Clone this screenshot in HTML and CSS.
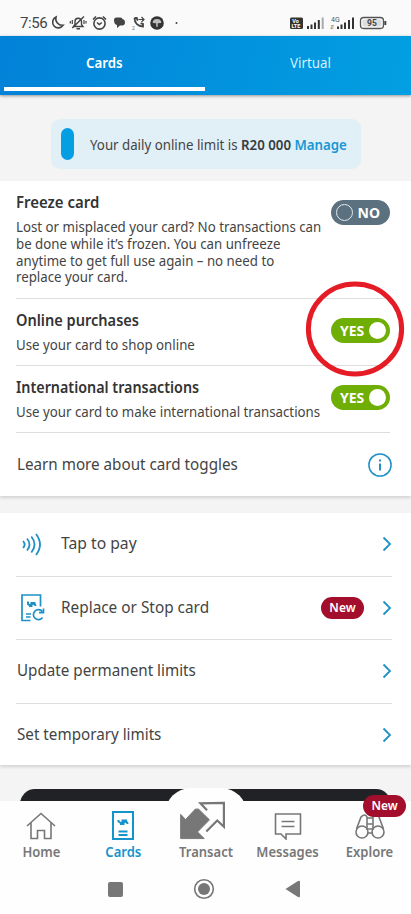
FILE: index.html
```html
<!DOCTYPE html>
<html lang="en">
<head>
<meta charset="utf-8">
<title>Cards</title>
<link rel="stylesheet" href="styles.css">
</head>
<body>
<div class="phone">
  <header class="status">
    <span class="time">7:56</span>
    <svg class="status-left" width="132" height="18" viewBox="49 14 132 18" fill="none" stroke="#444" stroke-width="1.6">
      <path d="M56 17a5.7 5.7 0 1 0 7.2 8.2A6.5 6.5 0 0 1 56 17z"/>
      <path stroke-width="1.400" d="M73.500 26.500l1.500-2v-3c0-4 6-4.500 6.500 0v3l1.500 2zM76.500 28.800h3.500M72.300 28L84 16.500"/><path stroke-width="1.200" d="M72.300 20v4M70.300 21v2.500M84 20v4M86 21v2.500"/>
      <circle cx="99.500" cy="23.500" r="5.600"/><path d="M97 22.500l2.300 2 2.500-2M93 19.500l3-3M106 19.500l-3-3"/>
      <path fill="#444" stroke="none" d="M114 20q0-2.500 2.500-2.500h4q1.500 0 2 1.500 2.500.5 2.500 3.500 0 3-3 3h-2l-3 2.500v-3q-3-.5-3-5z"/>
      <path stroke-width="1.800" d="M134.500 18c0 5 3.500 8.500 8.500 8.500v-2.500l-2.500-.7M134.500 18h2.300l.8 2.700"/>
      <path stroke-width="1.200" d="M138.500 19.500h5M141.500 17l2.500 2.500-2.500 2.500"/>
      <circle cx="157" cy="23" r="6.800" fill="#333" stroke="none"/><path fill="#bbb" stroke="none" d="M152.700 23q0-4 4.300-4t4.300 4l-3.500.3v3.500h-1.600v-3.500z"/>
      <circle cx="176.500" cy="23" r="1" fill="#444" stroke="none"/>
      <text class="tiny" x="132" y="29.500">2</text>
    </svg>
    <svg class="status-right" width="98" height="18" viewBox="289 14 98 18">
      <rect x="290" y="17.500" width="13" height="11.500" rx="1.500" fill="#333"/>
      <text class="volte" x="292.300" y="23">Vo</text><text class="volte" x="291.500" y="28">LTE</text>
      <path stroke="#333" stroke-width="2" fill="none" d="M308 29v-3M311.500 29v-4.500M315 29v-6.500M318.800 29v-9"/><path stroke="#aaa" stroke-width="2" d="M322.700 29v-11.500"/>
      <text class="net" x="331" y="21.500">4G</text><text class="tiny" x="330" y="28.500">⇵</text>
      <path stroke="#333" stroke-width="2" fill="none" d="M338 29v-2.500M341.500 29v-4.500M345 29v-6.500M349 29v-9M353 29v-11.500"/>
      <rect x="360.500" y="17.500" width="23" height="11" rx="3.200" fill="#fafafa" stroke="#555" stroke-width="1.300"/><rect x="362.500" y="19.500" width="19" height="7" rx="1.500" fill="#ddd"/>
      <path stroke="#444" stroke-width="2" d="M385.300 21v4"/><text class="batt" x="367" y="26.200">95</text>
    </svg>
  </header>
  <nav class="tabs"><div class="tab active"><span class="t-cards">Cards</span></div><div class="tab"><span class="t-virtual">Virtual</span></div></nav>
  <main>
    <div class="notice"><i class="pill"></i><p>Your daily online limit is <b class="amount">R20 000</b> <b class="manage">Manage</b></p></div>
    <section class="panel toggles">
      <div class="setting freeze"><div><h2>Freeze card</h2><p class="desc">Lost or misplaced your card? No transactions can<br>be done while it’s frozen. You can unfreeze<br>anytime to get full use again – no need to<br>replace your card.</p></div><div class="switch off"><i></i><span>NO</span></div></div>
      <div class="setting"><div><h2 class="tight">Online purchases</h2><p class="desc">Use your card to shop online</p></div><div class="switch"><span>YES</span><i></i><svg class="ring" width="100" height="98" viewBox="0 0 100 98"><ellipse cx="50" cy="49" rx="46.600" ry="45" fill="none" stroke="#e51c25" stroke-width="5"/></svg></div></div>
      <div class="setting"><div><h2 class="tighter">International transactions</h2><p class="desc">Use your card to make international transactions</p></div><div class="switch"><span>YES</span><i></i></div></div>
      <div class="learn"><span class="label">Learn more about card toggles</span><svg width="24" height="24" viewBox="0 0 24 24" fill="none" stroke="#1f91c7" stroke-width="1.500"><circle cx="12" cy="12" r="11.100"/><path stroke-width="2" d="M12 10.500v7M12 6.500v2"/></svg></div>
    </section>
    <section class="panel menu">
      <div class="row"><svg class="lead" width="24" height="30" viewBox="0 0 24 30" fill="none" stroke="#1f91c7" stroke-width="1.800"><path d="M3 12q3.300 3.500 0 7M7 9.500q5 6 0 12M11.300 7.500q6.500 8 0 16M16 5q8 10.500 0 21"/></svg><span class="label wide">Tap to pay</span><svg class="chev" width="10" height="16" viewBox="0 0 10 16"><path d="M1.500 1.500L8 8l-6.500 6.500"/></svg></div>
      <div class="row"><svg class="lead" width="25" height="30" viewBox="0 0 25 30" fill="none" stroke="#1f91c7" stroke-width="1.700"><path d="M10.500 27.500H2V2h18.500v11.500M6 21h5M6 24h4.500"/><path stroke-width="2" d="M7 9.500h1v1.500q1.500 1.500 3 .5t3-.5q1.500.5 1.500 2M9 13h3.500M10.500 10h5"/><path d="M22.300 18.500a5 5 0 1 0 .2 6M23.500 15.500v4.200H19"/></svg><span class="label replace">Replace or Stop card</span><b class="new">New</b><svg class="chev" width="10" height="16" viewBox="0 0 10 16"><path d="M1.500 1.500L8 8l-6.500 6.500"/></svg></div>
      <div class="row third"><span class="label">Update permanent limits</span><svg class="chev" width="10" height="16" viewBox="0 0 10 16"><path d="M1.500 1.500L8 8l-6.500 6.500"/></svg></div>
      <div class="row"><span class="label">Set temporary limits</span><svg class="chev" width="10" height="16" viewBox="0 0 10 16"><path d="M1.500 1.500L8 8l-6.500 6.500"/></svg></div>
    </section>
    <div class="dark-card"></div>
  </main>
  <footer>
    <nav class="bottom">
      <div class="item"><svg width="30" height="28" viewBox="0 0 30 28" fill="none" stroke="#777" stroke-width="1.600"><path d="M1 14L15 1.500 29 14M5 11v15.500h6.500v-8h7v8H25V11"/></svg><span>Home</span></div>
      <div class="item on"><svg width="24" height="30" viewBox="0 0 24 30" fill="none" stroke="#1593cb" stroke-width="2"><path d="M2 2h20v27H2zM7.500 21.500h9M7.500 25h9"/><path d="M7.500 10v1.500q1.500 2 4 1t4-.5q1 .5 1 2M9 14h4.500M10.500 10.500h5.500"/></svg><span>Cards</span></div>
      <div class="item transact"><svg width="49" height="41" viewBox="0 0 49 41"><path fill="#777" stroke="#777" stroke-linejoin="round" d="M1.500 14l5.200 5.500L17 8.500h3.300l11.500 11.300-12.500 12.700 7 7H1.500z"/><path fill="none" stroke="#777" stroke-width="2.300" d="M29.300 9.700l-7-7.200L47 2v25l-7-6.500L28.500 32"/></svg><span>Transact</span></div>
      <div class="item"><svg width="28" height="28" viewBox="0 0 28 28" fill="none" stroke="#777" stroke-width="1.600"><path d="M1.500 2h25v20H12v5l-5-5H1.500zM7.500 9.500h13M7.500 14.500h13"/></svg><span>Messages</span></div>
      <div class="item"><svg width="30" height="28" viewBox="0 0 30 28" fill="none" stroke="#777" stroke-width="1.600"><circle cx="7" cy="20" r="6"/><circle cx="23" cy="20" r="6"/><path d="M1.500 17L6 5q4-4 6 0v13M28.500 17L24 5q-4-4-6 0v13M12 6h6M12 12h6M12 17h6M12 21h6"/></svg><span>Explore</span><b class="new float">New</b></div>
    </nav>
    <div class="system"><svg width="200" height="24" viewBox="105 877 200 24" fill="#777"><rect x="108" y="882" width="15" height="15" rx="2"/><circle cx="204" cy="889" r="9.300" fill="none" stroke="#777" stroke-width="1.600"/><circle cx="204" cy="889" r="6"/><path d="M285.500 889l12.500-8q2-1 2 1v14q0 2-2 1z"/></svg></div>
  </footer>
</div>
</body>
</html>
```
FILE: styles.css
```css
* { box-sizing: border-box; }
body { margin: 0; background: #f4f4f4; color: #444; font-family: "Noto Sans", sans-serif; }
h2, p { margin: 0; }
span, b, h2 { white-space: nowrap; }
.phone { height: 914px; overflow: hidden; display: flex; flex-direction: column; }
.status { height: 36px; background: #fafafa; display: flex; padding: 14px 24px 0 20px; flex: none; }
.time { font: 15px/18px Roboto, sans-serif; width: 29px; letter-spacing: -.4px; color: #444; }
.status-right { margin-left: auto; }
.tiny { font: 5px Roboto, sans-serif; fill: #666; stroke: none; }
.volte { font: bold 5.500px Roboto, sans-serif; fill: #fff; }
.net { font: 7px Roboto, sans-serif; fill: #555; }
.batt { font: bold 8.500px Roboto, sans-serif; fill: #444; }
.tabs { height: 59px; flex: none; display: flex; background: linear-gradient(100deg, #0282d8, #029fe2); box-shadow: 0 1px 3px #0006; position: relative; }
.tab { flex: 1; height: 55px; text-align: center; color: #d5effb; font-size: 14px; line-height: 54px; }
.tab span { display: inline-block; transform: scaleX(.95); }
.active { flex: none; width: 201px; color: #fff; font-weight: 600; border-bottom: 4px solid #fff; margin-left: 4px; }
.t-virtual { margin-left: 4px; }
main { height: 706px; flex: none; padding-top: 24px; overflow: hidden; }
.notice { width: 310px; height: 50px; margin: 0 0 12px 51px; border-radius: 9px; background: #e1eff6; display: flex; align-items: center; padding-left: 10px; font-size: 14px; }
.notice p { white-space: nowrap; transform: scaleX(.948); transform-origin: left; }
.pill { width: 13px; height: 32px; border-radius: 7px; background: #049fe3; margin-right: 16px; flex: none; }
.amount { font-weight: 600; color: #333d42; }
.manage { font-weight: 600; color: #1698d5; }
.panel { background: #fff; padding: 0 21px 0 16px; box-shadow: 0 2px 3px #0002; }
.toggles { height: 315px; margin-bottom: 17px; }
.setting { height: 67px; display: flex; justify-content: space-between; padding-top: 9px; border-bottom: 1px solid #ddd; position: relative; }
.freeze { height: 118px; }
h2 { font-size: 16px; line-height: 24px; font-weight: 600; color: #333; transform: scaleX(.935); transform-origin: left; }
.tight { transform: scaleX(.91); }
.tighter { transform: scaleX(.895); }
.desc { font-size: 14px; line-height: 16.800px; margin-top: 5px; white-space: nowrap; width: 332px; transform: scaleX(.948); transform-origin: left; }
.switch { width: 59px; height: 25px; border-radius: 13px; background: #6fae04; color: #fff; font-size: 14px; font-weight: 700; display: flex; align-items: center; justify-content: space-between; padding: 0 4px 0 9px; margin-top: 10px; flex: none; position: absolute; right: 0; }
.switch i { width: 17px; height: 17px; border-radius: 50%; background: #fff; }
.off { background: #5b717f; padding: 0 10px 0 5px; }
.off i { border: 1px solid #e4eaed; background: none; }
.ring { position: absolute; left: -26px; top: -38px; z-index: 3; }
.learn { height: 64px; display: flex; align-items: center; justify-content: space-between; font-size: 16px; margin-right: -2px; }
.label { transform: scaleX(.95); transform-origin: left; position: relative; top: -1px; margin-left: 1px; }
.wide { transform: scaleX(.98); }
.replace { transform: scaleX(.96); margin-left: 0; }
.menu { height: 252px; padding-right: 19px; }
.row { height: 63.500px; display: flex; align-items: center; border-bottom: 1px solid #ddd; font-size: 16px; }
.row:last-child { border: 0; height: 62px; }
.lead { margin: 0 16px 0 4px; }
.chev { margin-left: auto; fill: none; stroke: #1f91c7; stroke-width: 1.800; }
.new { width: 43px; height: 22px; border-radius: 11px; background: #a20e2b; color: #fff; font-size: 12px; line-height: 21px; text-align: center; font-weight: 600; margin-left: auto; }
.new + .chev { margin-left: 18px; }
.dark-card { width: 371px; height: 30px; margin: 24px 0 0 20px; border-radius: 24px; background: #202225; }
footer { flex: 1; background: #fefefe; position: relative; }
.bottom { display: flex; height: 64px; }
.item { flex: 1; display: flex; flex-direction: column; justify-content: flex-end; align-items: center; gap: 3px; color: #777; font-size: 14px; line-height: 18px; font-weight: 600; position: relative; padding-bottom: 4px; }
.item span { transform: scaleX(.93); }
.item svg { position: relative; }
.on { color: #1593cb; }
.transact svg { margin-right: 6px; }
.transact::before { content: ""; position: absolute; width: 82px; height: 30px; background: #fefefe; border-radius: 26px 26px 0 0; top: -13px; }
.float { position: absolute; top: -6px; right: 5px; }
.system { display: flex; padding: 12px 0 0 105px; }
```
